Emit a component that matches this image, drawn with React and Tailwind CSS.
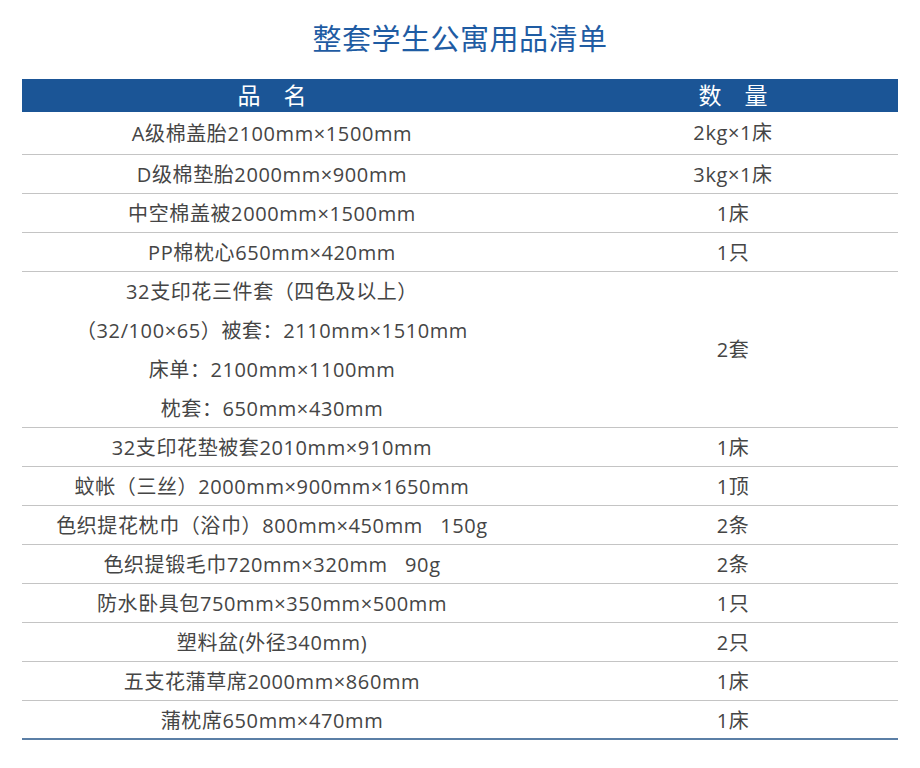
const rows = [
  { name: ["A级棉盖胎2100mm×1500mm"], qty: "2kg×1床", h: "h-[43px]" },
  { name: ["D级棉垫胎2000mm×900mm"], qty: "3kg×1床" },
  { name: ["中空棉盖被2000mm×1500mm"], qty: "1床" },
  { name: ["PP棉枕心650mm×420mm"], qty: "1只" },
  {
    name: [
      "32支印花三件套（四色及以上）",
      "（32/100×65）被套：2110mm×1510mm",
      "床单：2100mm×1100mm",
      "枕套：650mm×430mm",
    ],
    qty: "2套",
    h: "h-[156px]",
  },
  { name: ["32支印花垫被套2010mm×910mm"], qty: "1床" },
  { name: ["蚊帐（三丝）2000mm×900mm×1650mm"], qty: "1顶" },
  { name: ["色织提花枕巾（浴巾）800mm×450mm   150g"], qty: "2条" },
  { name: ["色织提锻毛巾720mm×320mm   90g"], qty: "2条" },
  { name: ["防水卧具包750mm×350mm×500mm"], qty: "1只" },
  { name: ["塑料盆(外径340mm)"], qty: "2只" },
  { name: ["五支花蒲草席2000mm×860mm"], qty: "1床" },
  { name: ["蒲枕席650mm×470mm"], qty: "1床", last: true },
];

export default function App() {
  return (
    <div
      className="w-[920px] h-[768px] bg-white"
      style={{ fontFamily: '"Open Sans", "Noto Sans CJK SC", sans-serif' }}
    >
      <h1 className="h-[79px] flex items-center justify-center pb-[1px] text-[29px] text-[#1f5ca3] font-normal tracking-[0.5px]">
        整套学生公寓用品清单
      </h1>
      <div className="mx-[22px] w-[876px]">
        <div className="grid grid-cols-[500px_376px] h-[33px] bg-[#1b5596] text-white text-[23px] leading-[33px]">
          <div className="text-center">品　名</div>
          <div className="text-center pl-[46px]">数　量</div>
        </div>
        {rows.map((r, i) => (
          <div
            key={i}
            className={`grid grid-cols-[500px_376px] box-border ${r.h || "h-[39px]"} ${
              r.last ? "border-b-2 border-[#5b7fa6]" : "border-b border-[#c4c4c4]"
            } text-[20px] tracking-[0.6px] text-[#454545]`}
          >
            <div className="flex flex-col items-center justify-center">
              {r.name.map((line, j) => (
                <div key={j} className="leading-[39px] whitespace-pre">
                  {line}
                </div>
              ))}
            </div>
            <div className="flex items-center justify-center pl-[46px]">{r.qty}</div>
          </div>
        ))}
      </div>
    </div>
  );
}
